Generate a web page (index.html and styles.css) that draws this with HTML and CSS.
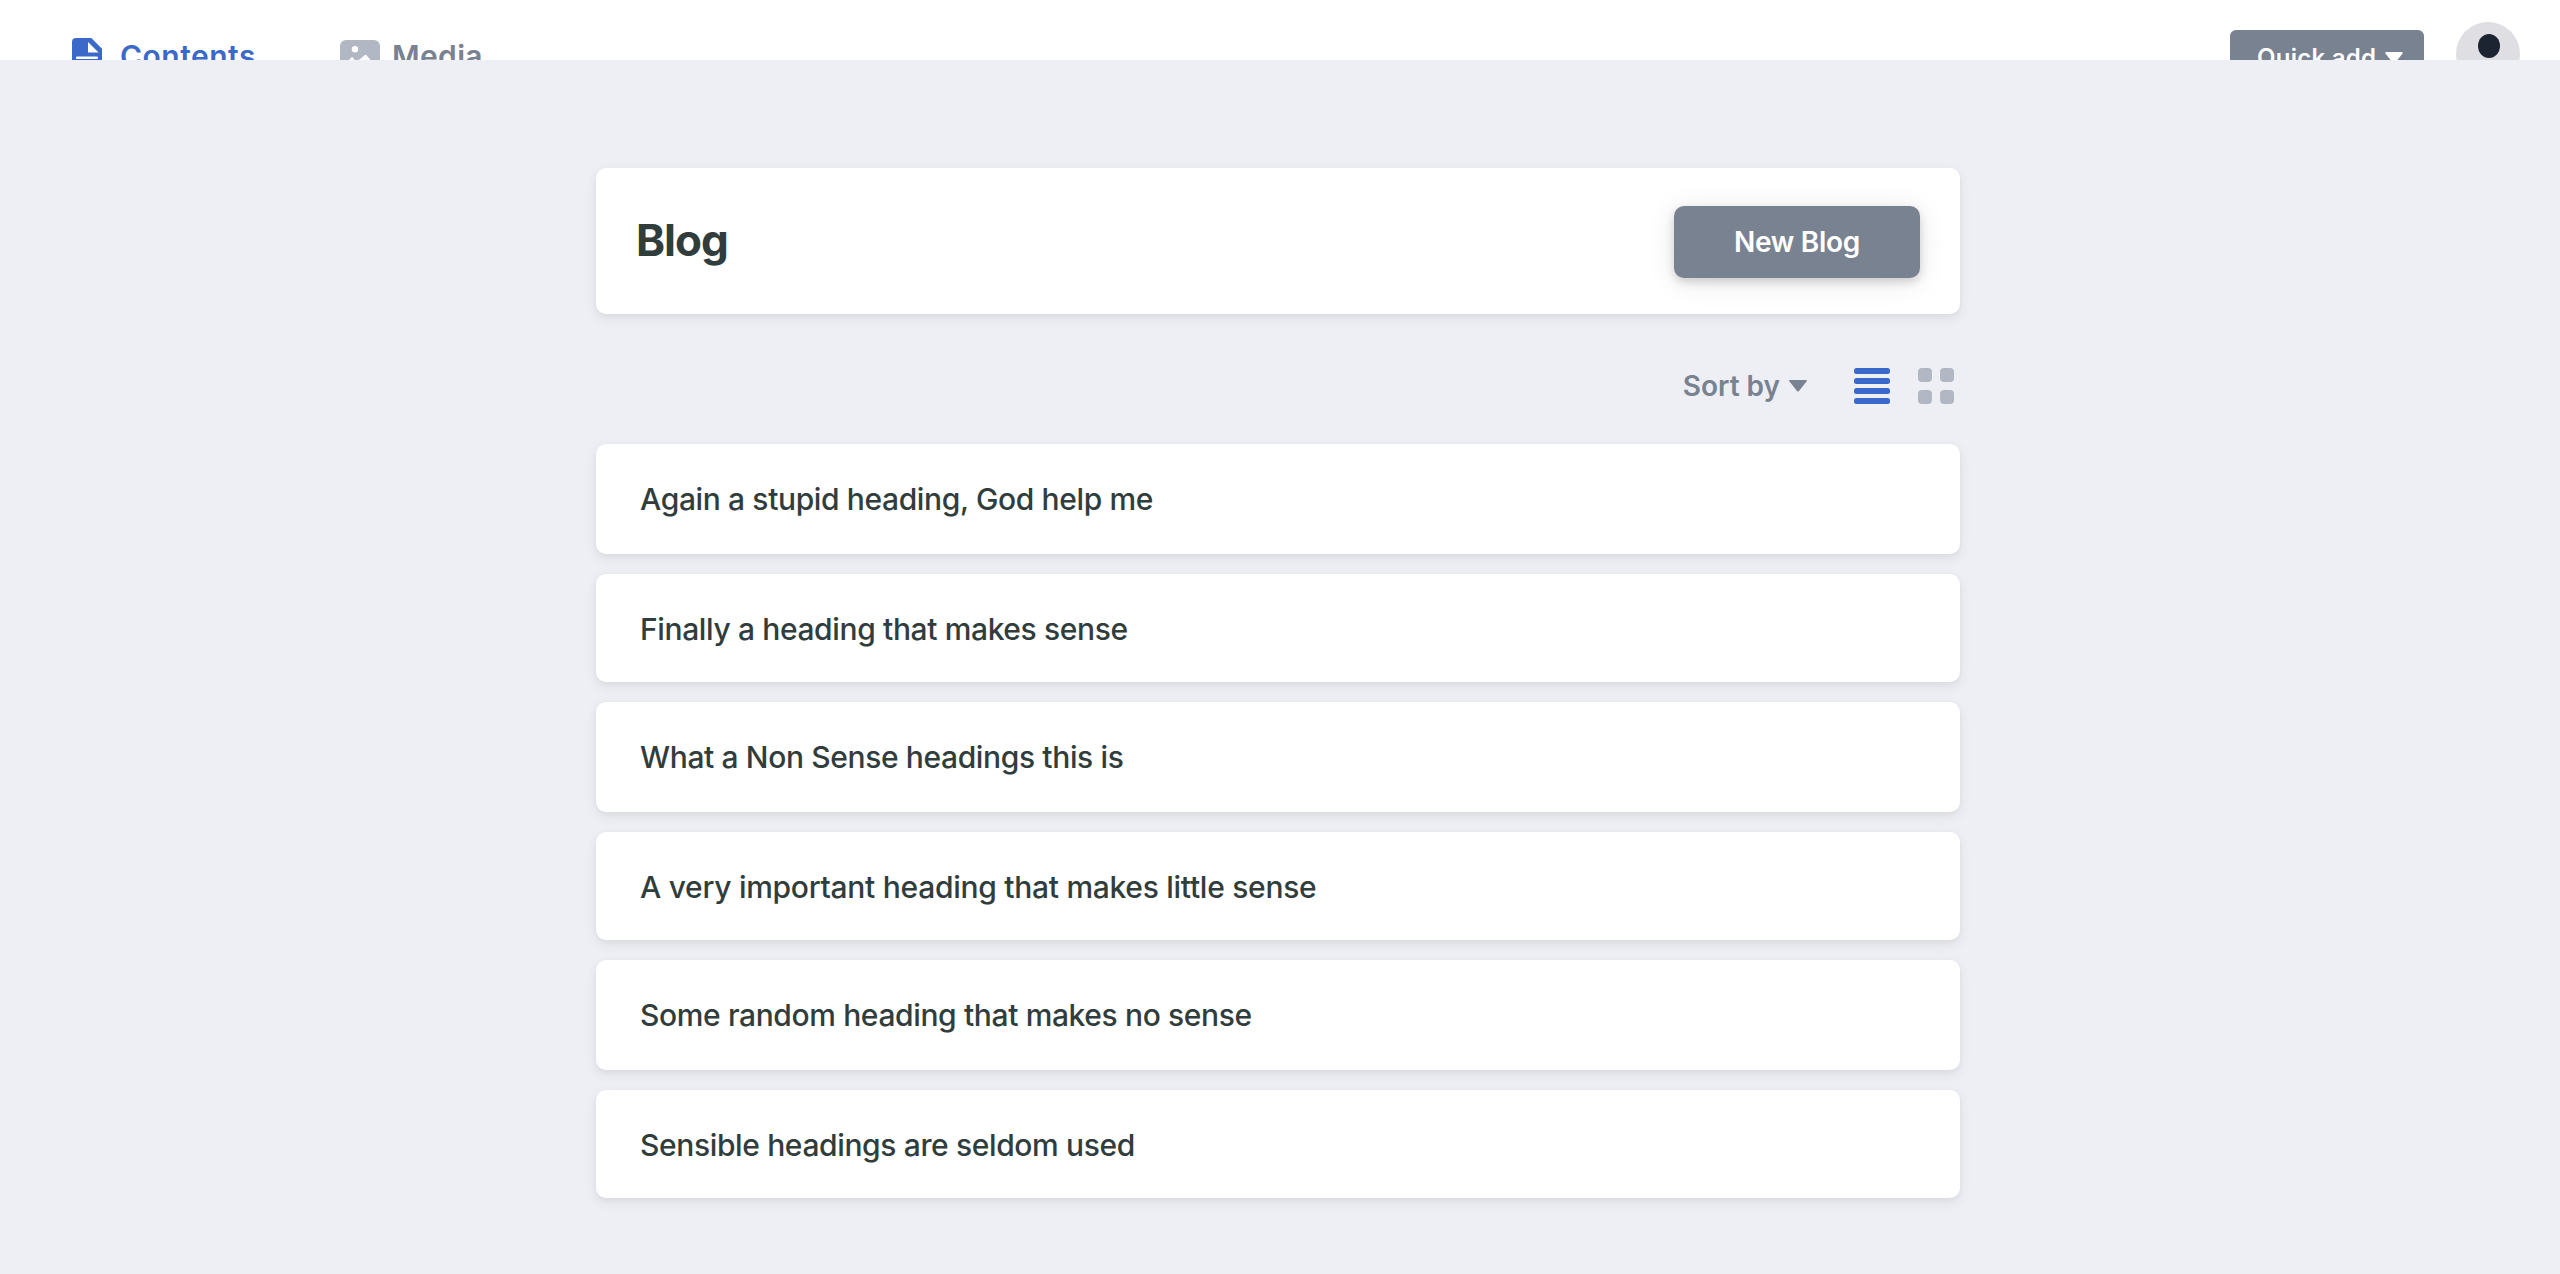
FILE: index.html
```
<!DOCTYPE html>
<html lang="en">
<head>
<meta charset="utf-8">
<title>Blog</title>
<link rel="stylesheet" href="styles.css">
</head>
<body>
<header class="topbar">
  <nav class="nav">
    <a class="nav-item active">
      <svg class="icon-doc" width="30" height="38" viewBox="0 0 30 38"><path fill="currentColor" fill-rule="evenodd" d="M4 0H19.3L30 10.7V34a4 4 0 0 1-4 4H4a4 4 0 0 1-4-4V4a4 4 0 0 1 4-4zM16 4V14.6H26.6zM5.2 18.5a1.3 1.3 0 0 0 0 2.6H24.8a1.3 1.3 0 0 0 0-2.6z"/></svg>
      <span>Contents</span>
    </a>
    <a class="nav-item">
      <svg class="icon-media" width="40" height="32" viewBox="0 0 40 32"><rect width="40" height="32" rx="6" fill="#b1b7c3"/><circle cx="15" cy="9.2" r="3.2" fill="#fff"/><path fill="#fff" d="M4 26L11.3 17.4Q12 16.6 12.7 17.4L16.5 22L24.8 15Q25.5 14.3 26.2 15L36 26z"/></svg>
      <span>Media</span>
    </a>
  </nav>
  <div class="actions">
    <button class="quick-add"><span>Quick add</span><svg width="18" height="12" viewBox="0 0 18 12"><path fill="currentColor" d="M1.5 0H16.5Q18.6 .3 17.2 2L10.2 10.8Q9 12 7.8 10.8L.8 2Q-.6 .3 1.5 0z"/></svg></button>
    <svg class="avatar" width="64" height="64" viewBox="0 0 64 64"><circle cx="32" cy="32" r="32" fill="#dfdee3"/><ellipse cx="33" cy="24" rx="11" ry="12" fill="#1c2431"/></svg>
  </div>
</header>
<main class="content">
  <section class="title-card">
    <h1>Blog</h1>
    <button class="new-blog">New Blog</button>
  </section>
  <div class="toolbar">
    <div class="sort"><span>Sort by</span><svg width="18" height="12" viewBox="0 0 18 12"><path fill="currentColor" d="M1 0H17Q18.6 .3 17.5 1.6L10 11Q9 12 8 11L.5 1.6Q-.6 .3 1 0z"/></svg></div>
    <svg class="view-list" width="36" height="36" viewBox="0 0 36 36" fill="#3b69c9"><rect width="36" height="6" rx="2.5"/><rect y="10" width="36" height="6" rx="2.5"/><rect y="20" width="36" height="6" rx="2.5"/><rect y="30" width="36" height="6" rx="2.5"/></svg>
    <svg class="view-grid" width="36" height="36" viewBox="0 0 36 36" fill="#b1b7c3"><rect width="14" height="14" rx="4"/><rect x="22" width="14" height="14" rx="4"/><rect y="22" width="14" height="14" rx="4"/><rect x="22" y="22" width="14" height="14" rx="4"/></svg>
  </div>
  <ul class="posts">
    <li>Again a stupid heading, God help me</li>
    <li>Finally a heading that makes sense</li>
    <li>What a Non Sense headings this is</li>
    <li class="long">A very important heading that makes little sense</li>
    <li>Some random heading that makes no sense</li>
    <li>Sensible headings are seldom used</li>
  </ul>
</main>
</body>
</html>
```
FILE: styles.css
```
* { box-sizing: border-box; }
body {
  margin: 0;
  min-height: 1274px;
  background: #eeeff4;
  color: #303d3c;
  font-family: Inter, "Liberation Sans", sans-serif;
}
svg { display: block; flex: none; }
button { border: 0; margin: 0; padding: 0; font: inherit; color: #fff; background: #798290; }
.topbar {
  display: flex;
  justify-content: space-between;
  align-items: flex-start;
  height: 60px;
  padding: 0 40px 0 72px;
  overflow: hidden;
  background: #fff;
}
.nav { display: flex; gap: 84px; height: 112px; }
.nav-item {
  display: flex;
  align-items: center;
  gap: 12px;
  color: #798290;
  font-size: 30px;
  font-weight: 600;
  letter-spacing: 0.35px;
}
.nav-item.active { gap: 18px; letter-spacing: 0.5px; color: #3b69c9; }
.icon-doc { margin-bottom: -2px; }
.actions { display: flex; gap: 32px; padding-top: 22px; }
.quick-add {
  display: flex;
  align-items: center;
  gap: 9px;
  width: 194px;
  height: 54px;
  margin-top: 8px;
  padding-left: 27px;
  border-radius: 6px;
  font-size: 24px;
  font-weight: 600;
  letter-spacing: 0.25px;
}
.quick-add svg { margin-top: 2px; }
.content { width: 1364px; margin: 108px 0 0 596px; }
.title-card, .posts li {
  background: #fff;
  border-radius: 10px;
  box-shadow: 0 4px 12px rgba(40, 50, 60, 0.09), 0 2px 4px rgba(40, 50, 60, 0.04);
}
.title-card {
  display: flex;
  align-items: center;
  justify-content: space-between;
  height: 146px;
  padding: 0 40px;
}
h1 { margin: -2px 0 0; font-size: 44px; font-weight: 700; letter-spacing: -1px; }
.new-blog {
  width: 246px;
  height: 72px;
  margin-top: 2px;
  border-radius: 10px;
  font-size: 28px;
  font-weight: 600;
  letter-spacing: -0.3px;
  box-shadow: 0 4px 30px rgba(0, 0, 0, 0.09), 0 4px 10px rgba(0, 0, 0, 0.16);
}
.toolbar {
  display: flex;
  align-items: center;
  justify-content: flex-end;
  height: 36px;
  margin: 54px 0 40px;
  padding-right: 6px;
}
.sort {
  display: flex;
  align-items: center;
  gap: 9px;
  margin-right: 47px;
  color: #798290;
  font-size: 28px;
  font-weight: 600;
}
.view-grid { margin-left: 28px; }
.posts { display: flex; flex-direction: column; gap: 20px; margin: 0; padding: 0; list-style: none; }
.posts li {
  height: 110px;
  padding-left: 44px;
  font-size: 30px;
  font-weight: 500;
  line-height: 110px;
  letter-spacing: -0.37px;
}
.posts li:nth-child(even) { height: 108px; }
.posts li.long { letter-spacing: -0.28px; }
```
